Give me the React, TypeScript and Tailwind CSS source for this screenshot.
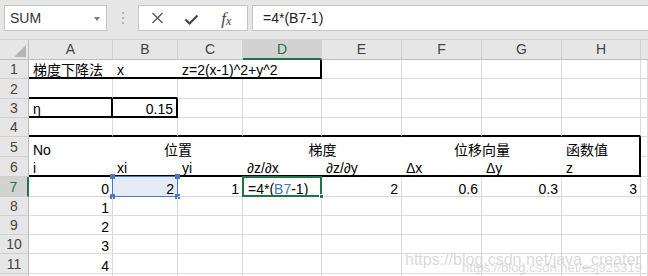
import type { ReactNode } from 'react'

const GRID = 'border-r border-b border-[#dadada]'
const W = ['w-[84px]', 'w-[65px]', 'w-[65px]', 'w-[79px]', 'w-[80px]', 'w-[80px]', 'w-[80px]', 'w-[79px]']
const COLS = ['A', 'B', 'C', 'D', 'E', 'F', 'G', 'H']

function Cell({
  w,
  className = GRID,
  right,
  center,
  children,
}: {
  w: string
  className?: string
  right?: boolean
  center?: boolean
  children?: ReactNode
}) {
  const align = right ? 'justify-end pr-[3px]' : center ? 'justify-center' : 'pl-[4px]'
  return (
    <div
      className={`${w} relative flex shrink-0 items-end whitespace-nowrap text-[14px] leading-[14px] text-black ${align} ${className}`}
    >
      {children}
    </div>
  )
}

function RowHead({ n, active }: { n: number; active?: boolean }) {
  return (
    <div
      className={`flex w-[29px] shrink-0 items-center justify-center border-b border-b-[#d0d0d0] pt-[1px] text-[14px] ${
        active
          ? 'border-r-2 border-r-[#217346] bg-[#d2d2d2] text-[#217346]'
          : 'border-r border-r-[#bdbdbd] bg-[#e6e6e6] text-[#444]'
      }`}
    >
      {n}
    </div>
  )
}

function Row({ n, h, active, children }: { n: number; h: string; active?: boolean; children: ReactNode }) {
  return (
    <div className={`flex ${h}`}>
      <RowHead n={n} active={active} />
      {children}
      <div className={`flex-1 ${GRID}`} />
    </div>
  )
}

function PlainRow({ n, h, a }: { n: number; h: string; a?: string }) {
  return (
    <Row n={n} h={h}>
      {W.map((w, i) => (
        <Cell key={i} w={w} right>
          {i === 0 ? a : null}
        </Cell>
      ))}
    </Row>
  )
}

function Toolbar() {
  return (
    <div className="flex h-[40px] items-start border-b border-[#d4d4d4] bg-[#e6e6e6] pl-[4px] pt-[5px]">
      <div className="relative flex h-[26px] w-[103px] items-center border border-[#c6c6c6] bg-white pl-[5px] text-[14px] text-[#333]">
        SUM
        <span className="absolute right-[6px] top-[11px] h-0 w-0 border-x-[3.5px] border-t-[4px] border-x-transparent border-t-[#7a7a7a]" />
      </div>
      <div className="flex h-[26px] w-[31px] flex-col items-center justify-center gap-[3px]">
        <span className="h-[2px] w-[2px] bg-[#b5b5b5]" />
        <span className="h-[2px] w-[2px] bg-[#b5b5b5]" />
        <span className="h-[2px] w-[2px] bg-[#b5b5b5]" />
      </div>
      <div className="flex h-[26px] w-[110px] items-center border border-[#c6c6c6] bg-white">
        <div className="flex w-[38px] justify-center">
          <svg width="13" height="12" viewBox="0 0 13 12">
            <path d="M1.5 1 L11.5 11 M11.5 1 L1.5 11" stroke="#555" strokeWidth="1.3" fill="none" />
          </svg>
        </div>
        <div className="flex w-[30px] justify-center pt-[2px]">
          <svg width="15" height="11" viewBox="0 0 15 11">
            <path d="M1.5 5.5 L5.5 9.5 L13.5 1.5" stroke="#444" strokeWidth="2.2" fill="none" />
          </svg>
        </div>
        <div className="flex w-[42px] justify-center font-['Liberation_Serif',serif] italic text-[#444]">
          <span className="text-[17px] leading-none">f</span>
          <span className="mt-[5px] text-[12px] leading-none">x</span>
        </div>
      </div>
      <div className="ml-[4px] flex h-[26px] flex-1 items-center border border-r-0 border-[#c6c6c6] bg-white pl-[10px] text-[14px] text-[#222]">
        =4*(B7-1)
      </div>
    </div>
  )
}

function ColHeader() {
  return (
    <div className="flex h-[20px]">
      <div className="flex w-[29px] shrink-0 items-end justify-end border-b border-r border-[#bdbdbd] bg-[#e6e6e6] pb-[2px] pr-[2px]">
        <svg width="12" height="12" viewBox="0 0 12 12">
          <path d="M12 0 L12 12 L0 12 Z" fill="#b4b4b4" />
        </svg>
      </div>
      {COLS.map((c, i) => (
        <div
          key={c}
          className={`${W[i]} flex shrink-0 items-center justify-center border-r border-r-[#d0d0d0] text-[14px] ${
            c === 'D'
              ? 'border-b-2 border-b-[#217346] bg-[#d2d2d2] text-[#217346]'
              : 'border-b border-b-[#bdbdbd] bg-[#e6e6e6] text-[#444]'
          }`}
        >
          {c}
        </div>
      ))}
      <div className="flex-1 border-b border-[#bdbdbd] bg-[#e6e6e6]" />
    </div>
  )
}

const BOX_B = 'border-r border-b-2 border-r-[#dadada] border-b-black'
const BOX_RB = 'border-r-2 border-b-2 border-black'
const NONE = 'border-0'

export default function App() {
  return (
    <div className="relative h-[276px] w-[648px] overflow-hidden bg-white font-['Liberation_Sans','Noto_Sans_CJK_SC',sans-serif]">
      <Toolbar />
      <ColHeader />

      <Row n={1} h="h-[19px]">
        <Cell w={W[0]} className="border-b-2 border-black">梯度下降法</Cell>
        <Cell w={W[1]} className="border-b-2 border-black">x</Cell>
        <Cell w={W[2]} className="border-b-2 border-black">z=2(x-1)^2+y^2</Cell>
        <Cell w={W[3]} className={BOX_RB} />
        {W.slice(4).map((w, i) => (
          <Cell key={i} w={w} />
        ))}
      </Row>

      <Row n={2} h="h-[20px]">
        <Cell w={W[0]} className={BOX_B} />
        <Cell w={W[1]} className={BOX_B} />
        {W.slice(2).map((w, i) => (
          <Cell key={i} w={w} />
        ))}
      </Row>

      <Row n={3} h="h-[19px]">
        <Cell w={W[0]} className={BOX_RB}>η</Cell>
        <Cell w={W[1]} className={BOX_RB} right>0.15</Cell>
        {W.slice(2).map((w, i) => (
          <Cell key={i} w={w} />
        ))}
      </Row>

      <Row n={4} h="h-[19px]">
        {W.map((w, i) => (
          <Cell key={i} w={w} className={BOX_B} />
        ))}
      </Row>

      <Row n={5} h="h-[20px]">
        <Cell w={W[0]} className={NONE}>No</Cell>
        <Cell w="w-[130px]" className={NONE} center>位置</Cell>
        <Cell w="w-[159px]" className={NONE} center>梯度</Cell>
        <Cell w="w-[160px]" className={NONE} center>位移向量</Cell>
        <Cell w={W[7]} className="border-r-2 border-black">函数值</Cell>
      </Row>

      <Row n={6} h="h-[20px]">
        {['i', 'xi', 'yi', '∂z/∂x', '∂z/∂y', 'Δx', 'Δy', 'z'].map((t, i) => (
          <Cell key={t} w={W[i]} className={i === 7 ? BOX_RB : 'border-b-2 border-black'}>
            {t}
          </Cell>
        ))}
      </Row>

      <Row n={7} h="h-[20px]" active>
        <Cell w={W[0]} right>0</Cell>
        <Cell w={W[1]} right className={`${GRID} bg-[#e6ecf6]`}>
          2
          <span className="pointer-events-none absolute inset-[-1px] border-[1.5px] border-[#4a78c4]" />
          <span className="absolute left-[-3px] top-[-3px] h-[5px] w-[5px] bg-[#4a78c4]" />
          <span className="absolute right-[-3px] top-[-3px] h-[5px] w-[5px] bg-[#4a78c4]" />
          <span className="absolute bottom-[-3px] left-[-3px] h-[5px] w-[5px] bg-[#4a78c4]" />
          <span className="absolute bottom-[-3px] right-[-3px] h-[5px] w-[5px] bg-[#4a78c4]" />
        </Cell>
        <Cell w={W[2]} right>1</Cell>
        <Cell w={W[3]} className={`${GRID} z-10`}>
          <span className="pl-[1px]">
            =4*(<span className="text-[#4472c4]">B7</span>-1)
          </span>
          <span className="pointer-events-none absolute inset-[-1px] border-2 border-[#217346]" />
          <span className="absolute bottom-[-3px] right-[-3px] h-[5px] w-[5px] border border-white bg-[#217346]" />
        </Cell>
        <Cell w={W[4]} right>2</Cell>
        <Cell w={W[5]} right>0.6</Cell>
        <Cell w={W[6]} right>0.3</Cell>
        <Cell w={W[7]} right>3</Cell>
      </Row>

      <PlainRow n={8} h="h-[19px]" a="1" />
      <PlainRow n={9} h="h-[19px]" a="2" />
      <PlainRow n={10} h="h-[19px]" a="3" />
      <PlainRow n={11} h="h-[20px]" a="4" />
      <PlainRow n={12} h="h-[20px]" />

      <span className="pointer-events-none absolute left-[405px] top-[248px] whitespace-nowrap text-[16px] text-[#cfcfcf]/80">
        https://blog.csdn.net/java_creater
      </span>
      <span className="pointer-events-none absolute left-[462px] top-[258px] whitespace-nowrap text-[13px] text-[#cfcfcf]/80">
        https://blog.csdn.net/esj925319
      </span>
    </div>
  )
}
